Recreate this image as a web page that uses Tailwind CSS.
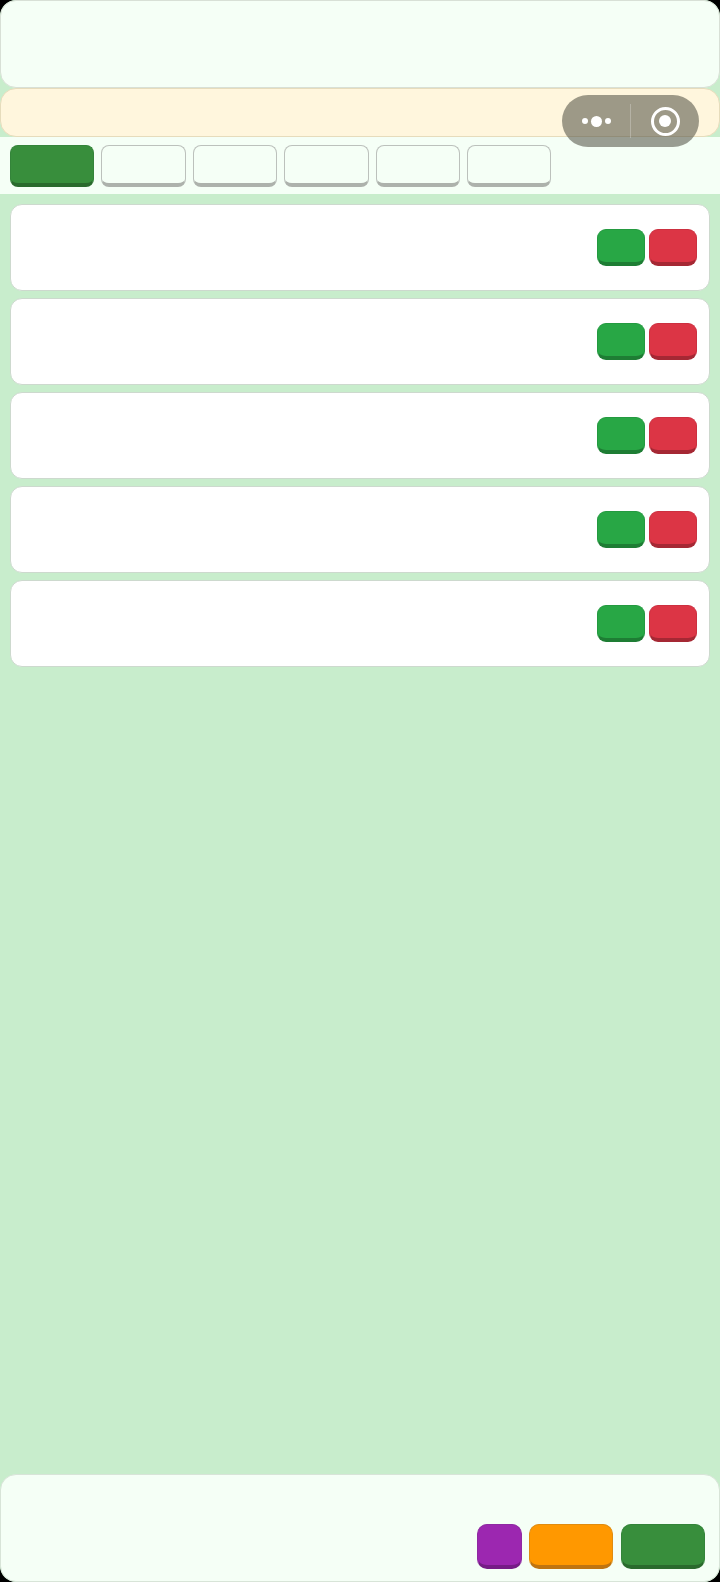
<!DOCTYPE html>
<html lang="zh">
<head>
    <meta charset="UTF-8">
    <meta name="viewport" content="width=device-width, initial-scale=1.0">
    <title>List</title>
    <script src="https://cdn.jsdelivr.net/npm/@tailwindcss/browser@4"></script>
</head>
<body class="bg-black">
    <div class="relative flex flex-col h-[1582px] w-[720px] bg-[#c8edcc] rounded-[16px] overflow-hidden">
        <!-- Header -->
        <div class="h-[88px] shrink-0 bg-[#f5fff6] border border-[#d8e0d6] rounded-[16px]"></div>

        <!-- Notice -->
        <div class="h-[49px] shrink-0 bg-[#fff6dd] border border-[#e6dcbc] rounded-[16px]"></div>

        <!-- Tabs -->
        <div class="h-[57px] shrink-0 bg-[#f5fff6] flex gap-[7px] px-[10px] pt-[7.5px]">
            <div class="w-[84.4px] h-[42.5px] rounded-[8px] bg-[#388e3c] border border-[#34843a] border-b-[4px] border-b-[#2a6a2d]"></div>
            <div class="w-[84.4px] h-[42.5px] rounded-[8px] bg-[#f5fff6] border border-[#bcc1bc] border-b-[4px] border-b-[#adb2ac]"></div>
            <div class="w-[84.4px] h-[42.5px] rounded-[8px] bg-[#f5fff6] border border-[#bcc1bc] border-b-[4px] border-b-[#adb2ac]"></div>
            <div class="w-[84.4px] h-[42.5px] rounded-[8px] bg-[#f5fff6] border border-[#bcc1bc] border-b-[4px] border-b-[#adb2ac]"></div>
            <div class="w-[84.4px] h-[42.5px] rounded-[8px] bg-[#f5fff6] border border-[#bcc1bc] border-b-[4px] border-b-[#adb2ac]"></div>
            <div class="w-[84.4px] h-[42.5px] rounded-[8px] bg-[#f5fff6] border border-[#bcc1bc] border-b-[4px] border-b-[#adb2ac]"></div>
        </div>

        <!-- Rows -->
        <div class="flex-1 flex flex-col gap-[7px] px-[10px] pt-[10px]">
            <div class="h-[87px] bg-white border border-[#cdd9ce] rounded-[12px] flex justify-end gap-[4px] pt-[24px] pr-[12px]">
                <div class="w-[48px] h-[37px] rounded-[9px] bg-[#28a745] border border-[#249a40] border-b-[4px] border-b-[#1e7d34]"></div>
                <div class="w-[48px] h-[37px] rounded-[9px] bg-[#dc3545] border border-[#cc3040] border-b-[4px] border-b-[#a52834]"></div>
            </div>
            <div class="h-[87px] bg-white border border-[#cdd9ce] rounded-[12px] flex justify-end gap-[4px] pt-[24px] pr-[12px]">
                <div class="w-[48px] h-[37px] rounded-[9px] bg-[#28a745] border border-[#249a40] border-b-[4px] border-b-[#1e7d34]"></div>
                <div class="w-[48px] h-[37px] rounded-[9px] bg-[#dc3545] border border-[#cc3040] border-b-[4px] border-b-[#a52834]"></div>
            </div>
            <div class="h-[87px] bg-white border border-[#cdd9ce] rounded-[12px] flex justify-end gap-[4px] pt-[24px] pr-[12px]">
                <div class="w-[48px] h-[37px] rounded-[9px] bg-[#28a745] border border-[#249a40] border-b-[4px] border-b-[#1e7d34]"></div>
                <div class="w-[48px] h-[37px] rounded-[9px] bg-[#dc3545] border border-[#cc3040] border-b-[4px] border-b-[#a52834]"></div>
            </div>
            <div class="h-[87px] bg-white border border-[#cdd9ce] rounded-[12px] flex justify-end gap-[4px] pt-[24px] pr-[12px]">
                <div class="w-[48px] h-[37px] rounded-[9px] bg-[#28a745] border border-[#249a40] border-b-[4px] border-b-[#1e7d34]"></div>
                <div class="w-[48px] h-[37px] rounded-[9px] bg-[#dc3545] border border-[#cc3040] border-b-[4px] border-b-[#a52834]"></div>
            </div>
            <div class="h-[87px] bg-white border border-[#cdd9ce] rounded-[12px] flex justify-end gap-[4px] pt-[24px] pr-[12px]">
                <div class="w-[48px] h-[37px] rounded-[9px] bg-[#28a745] border border-[#249a40] border-b-[4px] border-b-[#1e7d34]"></div>
                <div class="w-[48px] h-[37px] rounded-[9px] bg-[#dc3545] border border-[#cc3040] border-b-[4px] border-b-[#a52834]"></div>
            </div>
        </div>

        <!-- Footer -->
        <div class="h-[108px] shrink-0 bg-[#f5fff6] border border-[#d8e4d8] rounded-[16px] flex justify-end pt-[49px] pr-[14px]">
            <div class="w-[45px] h-[45px] rounded-[10px] bg-[#9c27b0] border border-[#8f2aa2] border-b-[4px] border-b-[#761c86]"></div>
            <div class="ml-[7px] w-[84px] h-[45px] rounded-[10px] bg-[#ff9800] border border-[#e08c10] border-b-[4px] border-b-[#bf7410]"></div>
            <div class="ml-[8px] w-[84px] h-[45px] rounded-[10px] bg-[#388e3c] border border-[#34843a] border-b-[4px] border-b-[#2a6a2d]"></div>
        </div>

        <!-- WeChat capsule -->
        <div class="absolute left-[562px] top-[95px] w-[137px] h-[52px] rounded-full bg-[#4c4c40]/55 flex items-center">
            <div class="flex-1 flex items-center justify-center gap-[3px]">
                <span class="w-[6px] h-[6px] rounded-full bg-white"></span>
                <span class="w-[11px] h-[11px] rounded-full bg-white"></span>
                <span class="w-[6px] h-[6px] rounded-full bg-white"></span>
            </div>
            <div class="w-px h-[34px] bg-white/25"></div>
            <div class="flex-1 flex items-center justify-center">
                <div class="w-[29px] h-[29px] rounded-full border-[3px] border-white flex items-center justify-center">
                    <span class="w-[12px] h-[12px] rounded-full bg-white"></span>
                </div>
            </div>
        </div>
    </div>
</body>
</html>
